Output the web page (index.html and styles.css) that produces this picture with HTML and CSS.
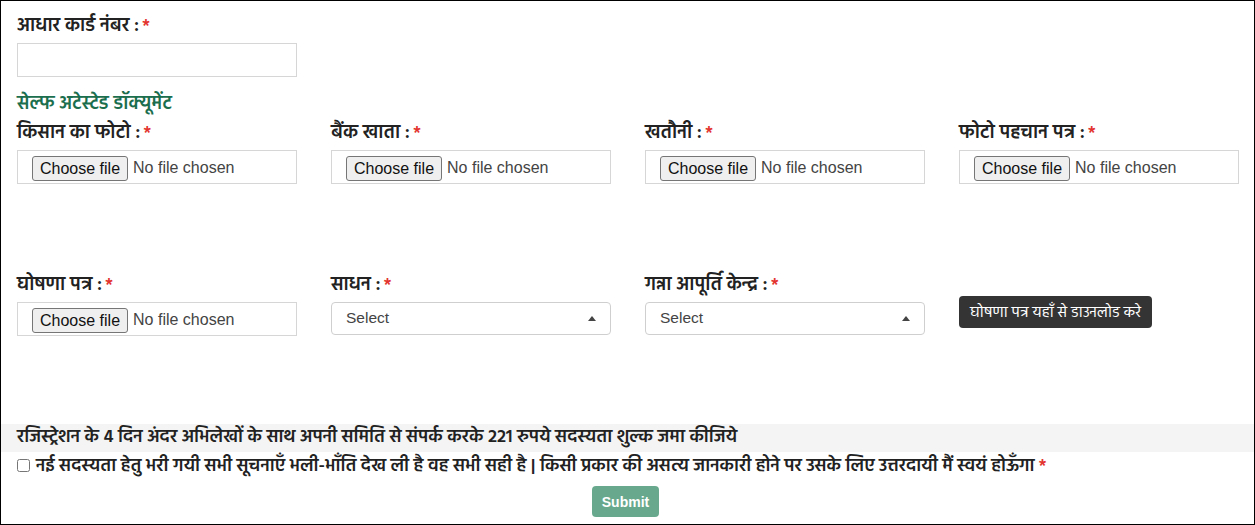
FILE: index.html
```html
<!DOCTYPE html>
<html lang="hi">
<head>
<meta charset="utf-8">
<title>सदस्यता फॉर्म</title>
<link rel="stylesheet" href="styles.css">
</head>
<body>
<form class="page">
  <div class="field single">
    <label class="lbl">आधार कार्ड नंबर :<span class="req">*</span></label>
    <input class="box text" type="text">
  </div>

  <h4 class="section">सेल्फ अटेस्टेड डॉक्यूमेंट</h4>

  <div class="grid">
    <div class="field">
      <label class="lbl">किसान का फोटो :<span class="req">*</span></label>
      <label class="box file"><input type="file" class="hidden-file"><span class="fbtn">Choose file</span><span class="fname">No file chosen</span></label>
    </div>
    <div class="field">
      <label class="lbl">बैंक खाता :<span class="req">*</span></label>
      <label class="box file"><input type="file" class="hidden-file"><span class="fbtn">Choose file</span><span class="fname">No file chosen</span></label>
    </div>
    <div class="field">
      <label class="lbl">खतौनी :<span class="req">*</span></label>
      <label class="box file"><input type="file" class="hidden-file"><span class="fbtn">Choose file</span><span class="fname">No file chosen</span></label>
    </div>
    <div class="field">
      <label class="lbl">फोटो पहचान पत्र :<span class="req">*</span></label>
      <label class="box file"><input type="file" class="hidden-file"><span class="fbtn">Choose file</span><span class="fname">No file chosen</span></label>
    </div>

    <div class="field">
      <label class="lbl">घोषणा पत्र :<span class="req">*</span></label>
      <label class="box file"><input type="file" class="hidden-file"><span class="fbtn">Choose file</span><span class="fname">No file chosen</span></label>
    </div>
    <div class="field">
      <label class="lbl">साधन :<span class="req">*</span></label>
      <div class="box select"><span>Select</span><svg class="caret" width="8" height="5" viewBox="0 0 8 5"><path d="M0 5 L4 0 L8 5 Z" fill="#444"/></svg></div>
    </div>
    <div class="field">
      <label class="lbl">गन्ना आपूर्ति केन्द्र :<span class="req">*</span></label>
      <div class="box select"><span>Select</span><svg class="caret" width="8" height="5" viewBox="0 0 8 5"><path d="M0 5 L4 0 L8 5 Z" fill="#444"/></svg></div>
    </div>
    <div class="field">
      <a class="download">घोषणा पत्र यहाँ से डाउनलोड करे</a>
    </div>
  </div>

  <div class="notice">रजिस्ट्रेशन के 4 दिन अंदर अभिलेखों के साथ अपनी समिति से संपर्क करके 221 रुपये सदस्यता शुल्क जमा कीजिये</div>

  <label class="agree"><input type="checkbox" class="chk"> नई सदस्यता हेतु भरी गयी सभी सूचनाएँ भली-भाँति देख ली है वह सभी सही है | किसी प्रकार की असत्य जानकारी होने पर उसके लिए उत्तरदायी मैं स्वयं होऊँगा <span class="req">*</span></label>

  <div class="actions"><button type="button" class="submit">Submit</button></div>
</form>
</body>
</html>
```

FILE: styles.css
```css
* { box-sizing: border-box; }
html, body { margin: 0; padding: 0; background: #fff; }
body {
  width: 1255px;
  height: 525px;
  font-family: "Hind", "Noto Sans Devanagari", "Liberation Sans", sans-serif;
  color: #222;
}
.page {
  width: 1255px;
  height: 525px;
  border: 1px solid #000;
  padding-top: 11px;
  overflow: hidden;
}
.field.single { padding: 0 16px; width: 296px; }
.lbl {
  display: block;
  height: 24px;
  font-size: 19px;
  line-height: 24px;
  font-weight: 600;
  color: #222;
  margin-bottom: 7px;
  padding-top: 2px;
  white-space: nowrap;
}
.req { color: #e3342f; margin-left: 3px; font-size: 17px; line-height: 1; }
.box {
  display: block;
  width: 280px;
  height: 34px;
  border: 1px solid #d6d6d6;
  background: #fff;
  margin: 0;
}
.text { padding: 6px 12px; }
.section {
  margin: 13px 16px 5px;
  height: 24px;
  font-size: 18.8px;
  line-height: 24px;
  font-weight: 600;
  color: #1b6e4e;
  padding-top: 2px;
}
.grid {
  display: grid;
  grid-template-columns: repeat(4, 280px);
  column-gap: 34px;
  row-gap: 87px;
  padding: 0 16px;
}
.file {
  display: flex;
  align-items: center;
  padding: 0 14px;
  font-family: "Liberation Sans", Arial, sans-serif;
  font-size: 16px;
  color: #444;
  cursor: pointer;
}
.hidden-file { display: none; }
.fbtn {
  display: inline-block;
  height: 25px;
  line-height: 23px;
  color: #111;
  background: #efefef;
  border: 1px solid #767676;
  border-radius: 3px;
  padding: 0 7px;
  margin-top: 2px;
  margin-right: 5px;
}
.fname { margin-top: 2px; color: #444; }
.select {
  display: flex;
  align-items: center;
  justify-content: space-between;
  border-radius: 4px;
  border-color: #cfcfcf;
  height: 33px;
  padding: 0 14px;
  font-family: "Liberation Sans", Arial, sans-serif;
  font-size: 15.5px;
  color: #444;
}
.select span { margin-top: -2px; }
.download {
  display: inline-block;
  margin-top: 25px;
  background: #343434;
  color: #fff;
  border-radius: 4px;
  font-size: 15.2px;
  line-height: 20px;
  padding: 7px 11px 5px;
  cursor: pointer;
  white-space: nowrap;
}
.notice {
  margin-top: 88px;
  background: #f4f4f4;
  height: 28px;
  line-height: 28px;
  padding: 0 16px;
  font-size: 18.15px;
  font-weight: 600;
  color: #222;
  white-space: nowrap;
}
.agree {
  display: flex;
  align-items: center;
  gap: 4px;
  height: 28px;
  padding: 0 16px;
  font-size: 18.15px;
  font-weight: 600;
  color: #222;
  white-space: nowrap;
}
.agree .req { margin-left: 0; }
.chk { width: 13px; height: 13px; margin: 0 2px 2px 0; }
.actions { text-align: center; margin-top: 6px; padding-right: 4px; }
.submit {
  background: #68a98e;
  color: #fff;
  border: 0;
  border-radius: 4px;
  height: 31px;
  padding: 0 10px;
  font-family: "Liberation Sans", Arial, sans-serif;
  font-size: 14px;
  font-weight: 700;
}
```
